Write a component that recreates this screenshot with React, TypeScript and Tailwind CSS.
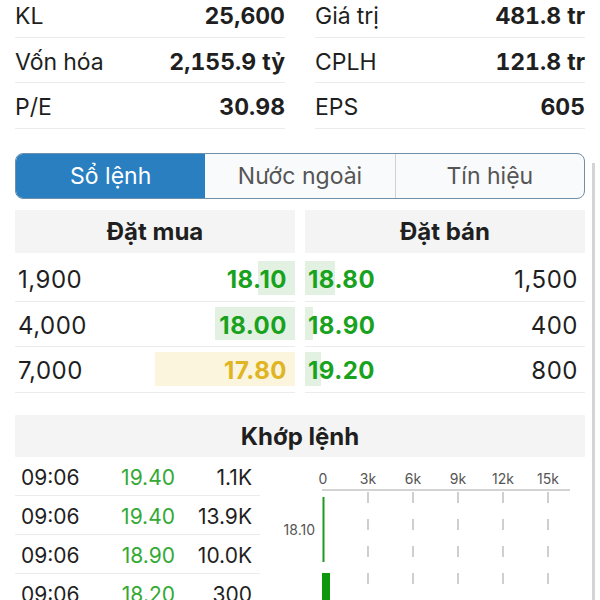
import React from "react";

const stats = [
    { l1: "KL", v1: "25,600", l2: "Giá trị", v2: "481.8 tr" },
    { l1: "Vốn hóa", v1: "2,155.9 tỷ", l2: "CPLH", v2: "121.8 tr" },
    { l1: "P/E", v1: "30.98", l2: "EPS", v2: "605" },
];

const bids = [
    { qty: "1,900", price: "18.10", bar: 37, color: "green" },
    { qty: "4,000", price: "18.00", bar: 80, color: "green" },
    { qty: "7,000", price: "17.80", bar: 140, color: "yellow" },
];

const asks = [
    { qty: "1,500", price: "18.80", bar: 30 },
    { qty: "400", price: "18.90", bar: 8 },
    { qty: "800", price: "19.20", bar: 16 },
];

const trades = [
    { time: "09:06", price: "19.40", vol: "1.1K" },
    { time: "09:06", price: "19.40", vol: "13.9K" },
    { time: "09:06", price: "18.90", vol: "10.0K" },
    { time: "09:06", price: "18.20", vol: "300" },
];

const ticks = ["0", "3k", "6k", "9k", "12k", "15k"];

function Chart() {
    return (
        <svg width="325" height="143" viewBox="0 0 325 143" className="block normal-nums">
            {ticks.map((t, i) => (
                <text key={t} x={63 + i * 45} y={27} textAnchor="middle" fontSize="14" fill="#555" fontFamily="Inter, sans-serif">{t}</text>
            ))}
            <line x1="62" y1="33" x2="310" y2="33" stroke="#c4c4c4" strokeWidth="1.5" />
            {ticks.slice(1).map((t, i) => (
                <line key={t} x1={108 + i * 45} y1="35" x2={108 + i * 45} y2="143" stroke="#b5b5b5" strokeWidth="1.3" strokeDasharray="11 16" />
            ))}
            <text x="55" y="78" textAnchor="end" fontSize="14" fill="#555" fontFamily="Inter, sans-serif">18.10</text>
            <rect x="62.5" y="40" width="2" height="65" fill="#1f9a1f" />
            <rect x="62" y="116" width="8" height="30" fill="#0f960f" />
        </svg>
    );
}

export default function App() {
    return (
        <div className="relative w-[600px] h-[600px] overflow-hidden bg-white font-['Inter','Noto_Sans',sans-serif] text-[#1f1f1f]">
            {/* Stats */}
            <div className="-mt-[8px] px-[15px] grid grid-cols-2 gap-x-[30px] tabular-nums">
                {stats.map((s) => (
                    <React.Fragment key={s.l1}>
                        <div className="h-[45.5px] pt-[4px] border-b border-[#ececec] flex items-center justify-between text-[23px]">
                            <span>{s.l1}</span>
                            <span className="font-bold">{s.v1}</span>
                        </div>
                        <div className="h-[45.5px] pt-[4px] border-b border-[#ececec] flex items-center justify-between text-[23px]">
                            <span>{s.l2}</span>
                            <span className="font-bold">{s.v2}</span>
                        </div>
                    </React.Fragment>
                ))}
            </div>

            {/* Tabs */}
            <div className="mx-[15px] mt-[24px] h-[46px] grid grid-cols-3 rounded-[8px] border border-[#6f8fab] overflow-hidden bg-[#f9fafb] text-[23px]">
                <div className="bg-[#2a7fc0] text-white flex items-center justify-center pt-[2px]">Sổ lệnh</div>
                <div className="flex items-center justify-center text-[#555] pt-[2px]">Nước ngoài</div>
                <div className="flex items-center justify-center text-[#555] pt-[2px] border-l border-[#c9d3dc]">Tín hiệu</div>
            </div>

            {/* Order book */}
            <div className="mx-[15px] mt-[11px] grid grid-cols-2 gap-x-[10px]">
                <div>
                    <div className="h-[43px] pt-[2px] bg-[#f4f4f4] flex items-center justify-center font-bold text-[24px]">Đặt mua</div>
                    <div className="mt-[3.5px]">
                        {bids.map((b) => (
                            <div key={b.qty} className="relative h-[45.5px] pt-[4px] border-b border-[#ececec] flex items-center justify-between pl-[3px] pr-[8px] text-[24px] tracking-[0.5px]">
                                <div
                                    className={b.color === "yellow" ? "absolute right-0 top-[5px] bottom-[6px] bg-[#fbf5dd]" : "absolute right-0 top-[5px] bottom-[6px] bg-[#e2f1e2]"}
                                    style={{ width: b.bar }}
                                />
                                <span className="relative">{b.qty}</span>
                                <span className={b.color === "yellow" ? "relative font-bold text-[#e0b422]" : "relative font-bold text-[#18a21d]"}>{b.price}</span>
                            </div>
                        ))}
                    </div>
                </div>
                <div>
                    <div className="h-[43px] pt-[2px] bg-[#f4f4f4] flex items-center justify-center font-bold text-[24px]">Đặt bán</div>
                    <div className="mt-[3.5px]">
                        {asks.map((a) => (
                            <div key={a.qty} className="relative h-[45.5px] pt-[4px] border-b border-[#ececec] flex items-center justify-between pl-[3px] pr-[7px] text-[24px] tracking-[0.5px]">
                                <div className="absolute left-0 top-[5px] bottom-[6px] bg-[#e2f1e2]" style={{ width: a.bar }} />
                                <span className="relative font-bold text-[#18a21d]">{a.price}</span>
                                <span className="relative">{a.qty}</span>
                            </div>
                        ))}
                    </div>
                </div>
            </div>

            {/* Khớp lệnh */}
            <div className="mx-[15px] mt-[22px] h-[42px] pt-[2px] bg-[#f4f4f4] flex items-center justify-center font-bold text-[24px]">Khớp lệnh</div>
            <div className="ml-[15px] flex">
                <div className="w-[245px]">
                    {trades.map((t, i) => (
                        <div key={i} className="h-[39px] pt-[4px] border-b border-[#ececec] flex items-center pl-[6px] text-[21px]">
                            <span className="w-[90px]">{t.time}</span>
                            <span className="w-[64px] text-right text-[#35a935]">{t.price}</span>
                            <span className="w-[77px] text-right">{t.vol}</span>
                        </div>
                    ))}
                </div>
                <Chart />
            </div>

            {/* scroll indicator */}
            <div className="absolute right-[5px] top-[163px] bottom-0 w-[3px] bg-[#d4d4d4]" />
        </div>
    );
}
